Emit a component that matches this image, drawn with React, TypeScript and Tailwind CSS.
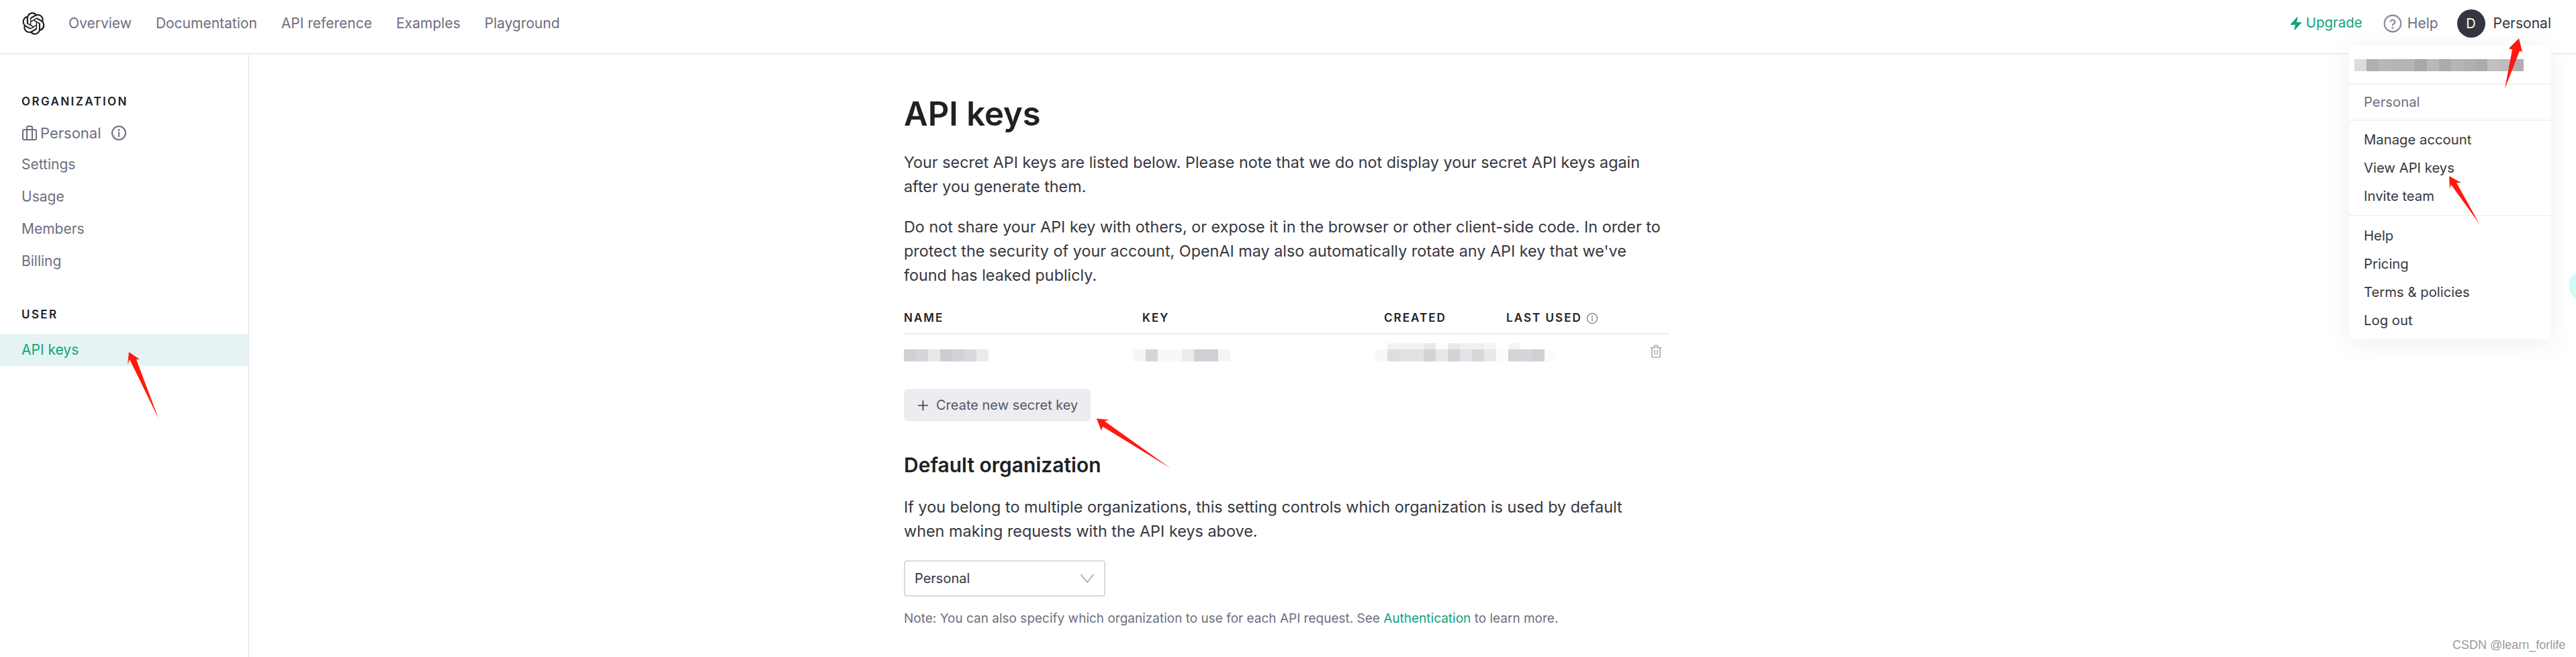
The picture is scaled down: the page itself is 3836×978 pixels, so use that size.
import { RiOpenaiFill } from "react-icons/ri";
import { HiBolt } from "react-icons/hi2";

const NAV = ["Overview", "Documentation", "API reference", "Examples", "Playground"];
const ORG = ["Settings", "Usage", "Members", "Billing"];

function Info({ size }: { size: string }) {
  return (
    <svg viewBox="0 0 24 24" fill="none" stroke="currentColor" strokeWidth="2" className={size}>
      <circle cx="12" cy="12" r="10" />
      <path d="M12 11v6" strokeLinecap="round" />
      <circle cx="12" cy="7.5" r="0.6" />
    </svg>
  );
}

function Blur({ cells, height = "h-[18px]" }: { cells: string[]; height?: string }) {
  return (
    <div className={`flex ${height}`}>
      {cells.map((c, i) => (
        <span key={i} className={`h-full w-[18px] ${c}`} />
      ))}
    </div>
  );
}

function Arrows() {
  return (
    <svg className="pointer-events-none absolute left-0 top-0 h-[978px] w-[3836px]" viewBox="0 0 3836 978">
      <g fill="#ff1a0d">
        <polygon points="192,524 208,535 203,535 236,623 193,535 190,543" />
        <polygon points="3751,57 3756,77 3752,76 3730,132 3741,74 3736,72" />
        <polygon points="3647,262 3665,272 3658,272 3692,333 3650,275 3648,281" />
        <polygon points="1633,623 1652,625 1645,627 1743,697 1642,635 1640,641" />
      </g>
    </svg>
  );
}

function Dropdown() {
  return (
    <div className="absolute left-[3498px] top-[68px] flex h-[437px] w-[301px] flex-col rounded-lg bg-white text-[20.3px] text-[#353740] shadow-[0_6px_40px_rgba(0,0,0,0.07)]">
      <div className="h-[58px] border-b-2 border-[#f2f2f5] pl-2 pt-5">
        <Blur
          cells={[
            "bg-[#dcdcdc]", "bg-[#b0b0b0]", "bg-[#b8b8b8]", "bg-[#b5b5b5]", "bg-[#b5b5b5]", "bg-[#a8a8a8]",
            "bg-[#b8b8b8]", "bg-[#ababab]", "bg-[#b5b5b5]", "bg-[#b0b0b0]", "bg-[#ababab]", "bg-[#c0c0c0]",
            "bg-[#bcbcbc]", "bg-[#b0b0b0]",
          ]}
        />
      </div>
      <div className="flex h-[54px] items-center border-b-2 border-[#f2f2f5] pl-[22px] text-[#6e6e80]">Personal</div>
      <div className="flex h-[142px] flex-col justify-center gap-[18px] border-b-2 border-[#f2f2f5] pl-[22px] leading-6">
        <span>Manage account</span>
        <span>View API keys</span>
        <span>Invite team</span>
      </div>
      <div className="flex flex-1 flex-col justify-center gap-[18px] pl-[22px] leading-6">
        <span>Help</span>
        <span>Pricing</span>
        <span>Terms &amp; policies</span>
        <span>Log out</span>
      </div>
    </div>
  );
}

export default function App() {
  return (
    <div className="relative h-[978px] w-[3836px] overflow-hidden bg-white font-['Inter',sans-serif] text-[#353740]">
      {/* top bar */}
      <header className="flex h-[81px] items-center border-b-2 border-[#ececf1] pb-[10px] pl-[30px] pr-[37px] text-[21px]">
        <RiOpenaiFill className="mr-8 h-10 w-10 text-[#202123]" />
        <nav className="flex gap-9 text-[#6e6e80]">
          {NAV.map((n) => (
            <span key={n}>{n}</span>
          ))}
        </nav>
        <div className="ml-auto flex items-center">
          <HiBolt className="mr-1 h-[22px] w-[22px] text-[#10a37f]" />
          <span className="text-[20.5px] text-[#10a37f]">Upgrade</span>
          <svg viewBox="0 0 24 24" fill="none" stroke="#8e8ea0" strokeWidth="2" className="ml-[31px] mr-2 h-7 w-7">
            <circle cx="12" cy="12" r="10.5" />
            <path d="M9.2 9.2a2.9 2.9 0 0 1 5.6 1c0 2-2.8 2.6-2.8 3.8" strokeLinecap="round" />
            <circle cx="12" cy="17.5" r="0.5" />
          </svg>
          <span className="text-[#6e6e80]">Help</span>
          <span className="ml-[28px] mr-3 flex h-[42px] w-[42px] items-center justify-center rounded-full bg-[#353740] text-[20px] text-white">
            D
          </span>
          <span>Personal</span>
        </div>
      </header>

      <div className="flex h-[897px]">
        {/* sidebar */}
        <aside className="w-[371px] shrink-0 border-r-2 border-[#ececf1] pt-[58px] text-[21px] text-[#6e6e80]">
          <h4 className="pl-8 text-[17px] font-semibold leading-6 tracking-[0.14em] text-[#202123]">ORGANIZATION</h4>
          <div className="mt-[11px] flex h-12 items-center pl-8">
            <svg viewBox="0 0 24 24" fill="none" stroke="currentColor" strokeWidth="2" className="mr-1 h-6 w-6">
              <rect x="2" y="7" width="20" height="15" rx="2" />
              <path d="M8 22V4a2 2 0 0 1 2-2h4a2 2 0 0 1 2 2v18" />
            </svg>
            <span className="text-[22px]">Personal</span>
            <Info size="ml-[14px] h-6 w-6" />
          </div>
          <div className="-mt-px">
            {ORG.map((o) => (
              <div key={o} className="flex h-12 items-center pl-8">
                {o}
              </div>
            ))}
          </div>
          <h4 className="mt-[43px] pl-8 text-[17px] font-semibold leading-6 tracking-[0.14em] text-[#202123]">USER</h4>
          <div className="mt-[17px] flex h-12 items-center bg-[#e6f3f3] pl-8 text-[#10a37f]">API keys</div>
        </aside>

        {/* main column */}
        <main className="pl-[975px]">
          <div className="w-[1140px]">
            <h1 className="mt-[57px] text-[49px] font-semibold leading-[64px] text-[#202123]">API keys</h1>
            <p className="mt-[22px] text-[23.35px] leading-9">
              Your secret API keys are listed below. Please note that we do not display your secret API keys again
              <br />
              after you generate them.
            </p>
            <p className="mt-6 text-[23.35px] leading-9">
              Do not share your API key with others, or expose it in the browser or other client-side code. In order to
              <br />
              protect the security of your account, OpenAI may also automatically rotate any API key that we've
              <br />
              found has leaked publicly.
            </p>

            {/* keys table */}
            <div className="mt-7 flex h-[42px] items-center border-b-2 border-[#ececf1] pb-[4px] text-[17px] font-semibold tracking-[0.12em] text-[#202123]">
              <span className="w-[355px]">NAME</span>
              <span className="w-[360px]">KEY</span>
              <span className="w-[182px]">CREATED</span>
              <span>LAST USED</span>
              <Info size="ml-[6px] h-[18px] w-[18px] text-[#8e8ea0]" />
            </div>
            <div className="flex h-[81px] items-start pt-[13px]">
              <div className="mt-[9px] w-[342px]">
                <Blur
                  cells={["bg-[#d1d1d5]", "bg-[#d6d6da]", "bg-[#e8e8ea]", "bg-[#cdcdd1]", "bg-[#d2d3d7]", "bg-[#d9d9dd]", "bg-[#e9eaec]"]}
                />
              </div>
              <div className="mt-[9px] w-[360px]">
                <Blur
                  cells={["bg-[#f5f5f6]", "bg-[#d6d6da]", "bg-[#f8f8f8]", "bg-[#f8f8f8]", "bg-[#ebecee]", "bg-[#d1d1d5]", "bg-[#cfd0d4]", "bg-[#f5f5f6]"]}
                />
              </div>
              <div>
                <Blur
                  height="h-[9px]"
                  cells={["bg-white", "bg-[#f2f2f3]", "bg-[#f2f2f3]", "bg-[#f2f2f3]", "bg-[#e8e8ea]", "bg-[#fbfbfb]", "bg-[#e8e8ea]", "bg-[#f0f0f2]", "bg-[#f0f0f2]", "bg-[#f5f5f6]", "bg-white", "bg-[#f4f4f5]"]}
                />
                <Blur
                  cells={["bg-[#f8f8f8]", "bg-[#dedee0]", "bg-[#e0e1e5]", "bg-[#e2e2e5]", "bg-[#d2d3d7]", "bg-[#e8e8ea]", "bg-[#d3d3d7]", "bg-[#e2e3e7]", "bg-[#d8d8db]", "bg-[#e9e9eb]", "bg-[#fbfbfb]", "bg-[#d4d4d8]", "bg-[#d6d6da]", "bg-[#cfd0d4]", "bg-[#fcfcfc]"]}
                />
              </div>
              <svg viewBox="0 0 24 24" fill="none" stroke="#acacbe" strokeWidth="1.8" strokeLinecap="round" strokeLinejoin="round" className="ml-auto mr-[9px] mt-px h-[22px] w-[22px]">
                <path d="M3.5 6h17M9 6V4a1.5 1.5 0 0 1 1.5-1.5h3A1.5 1.5 0 0 1 15 4v2M5.5 6v13.5A2 2 0 0 0 7.5 21.500h9a2 2 0 0 0 2-2V6M10 10.500v6.500M14 10.500v6.500" />
              </svg>
            </div>
            <button className="flex h-12 w-[278px] items-center rounded-md bg-[#ececf1] pl-[21px] text-[20px] text-[#565869]">
              <svg viewBox="0 0 15 15" fill="none" stroke="#353740" strokeWidth="1.6" className="mr-3 h-[15px] w-[15px]">
                <path d="M7.500 0v15M0 7.500h15" />
              </svg>
              Create new secret key
            </button>

            <h2 className="mt-[41px] text-[30px] font-semibold leading-12 text-[#202123]">Default organization</h2>
            <p className="mt-[21px] text-[23.4px] leading-9">
              If you belong to multiple organizations, this setting controls which organization is used by default
              <br />
              when making requests with the API keys above.
            </p>
            <div className="mt-[25px] flex h-[54px] w-[300px] items-center justify-between rounded border-2 border-[#d9d9e3] pl-[14px] pr-[13px] text-[20px]">
              Personal
              <svg viewBox="0 0 20 12" fill="none" stroke="#acacbe" strokeWidth="1.5" className="h-[14px] w-6">
                <path d="M2 1l8 10 8-10" />
              </svg>
            </div>
            <p className="mt-[21px] text-[19px] leading-6 text-[#6e6e80]">
              Note: You can also specify which organization to use for each API request. See{" "}
              <span className="text-[#10a37f]">Authentication</span> to learn more.
            </p>
          </div>
        </main>
      </div>

      <Dropdown />
      {/* chat launcher peeking in at the edge */}
      <span className="absolute left-[3825px] top-[403px] h-11 w-11 rounded-full bg-[#d2faf6]" />
      <span className="absolute left-[3652px] top-[950px] font-['Liberation_Sans',sans-serif] text-[18px] leading-5 text-[#9a9a9a]">
        CSDN @learn_forlife
      </span>
      <Arrows />
    </div>
  );
}
